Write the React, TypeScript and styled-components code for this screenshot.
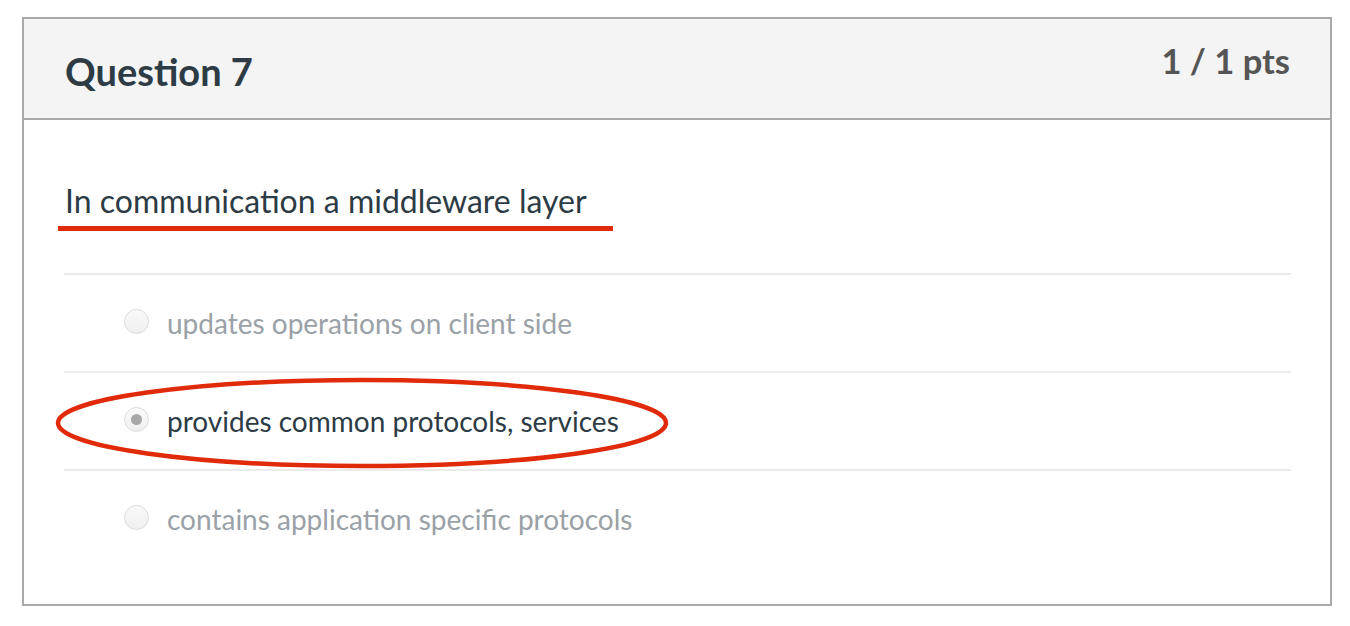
import React from "react";
import styled, { createGlobalStyle } from "styled-components";

const Global = createGlobalStyle`
  html, body { margin: 0; padding: 0; background: #fff; }
  body { font-family: Lato, "Open Sans", sans-serif; }
`;

const Page = styled.div`
  padding: 17px 19px 0 22px;
  width: 1350px;
  box-sizing: border-box;
`;

const Card = styled.div`
  position: relative;
  width: 1310px;
  height: 589px;
  box-sizing: border-box;
  border: 2px solid #a9a9a9;
  background: #fff;
`;

const Header = styled.div`
  height: 101px;
  box-sizing: border-box;
  background: #f4f4f4;
  border-bottom: 2px solid #a9a9a9;
  display: flex;
  justify-content: space-between;
  align-items: flex-start;
  padding: 0 40px 0 41px;
`;

const Title = styled.h2`
  margin: 0;
  margin-top: 30px;
  font-size: 38px;
  font-weight: 700;
  color: #2d3b45;
  line-height: 44px;
`;

const Points = styled.div`
  margin-top: 23px;
  font-size: 34.5px;
  font-weight: 700;
  color: #555;
  line-height: 38px;
`;

const Body = styled.div`
  padding: 0 39px 0 40px;
`;

const QuestionText = styled.p`
  position: relative;
  margin: 0;
  padding: 62px 0 53px 1px;
  font-size: 32px;
  color: #2d3b45;
  line-height: 38px;
  border-bottom: 2px solid #ebebeb;
`;

const Answer = styled.label<{ $last?: boolean }>`
  position: relative;
  display: flex;
  align-items: center;
  gap: 18px;
  height: 96px;
  padding-left: 60px;
  border-bottom: ${(p) => (p.$last ? "none" : "2px solid #ebebeb")};
`;

const Radio = styled.span<{ $checked?: boolean }>`
  width: 23px;
  height: 23px;
  border-radius: 50%;
  border: 1px solid #dcdcdc;
  background: linear-gradient(#fafafa, #efefef);
  display: flex;
  align-items: center;
  justify-content: center;
  flex: none;
  margin-top: -4px;
  &::after {
    content: "";
    display: ${(p) => (p.$checked ? "block" : "none")};
    width: 11px;
    height: 11px;
    border-radius: 50%;
    background: #a8a8a8;
  }
`;

const AnswerText = styled.span<{ $selected?: boolean }>`
  font-size: 28px;
  color: ${(p) => (p.$selected ? "#2d3b45" : "#9aa1a7")};
  line-height: 34px;
`;

const Underline = styled.span`
  position: absolute;
  left: -6px;
  top: 106px;
  width: 555px;
  height: 5px;
  background: #e02a0a;
`;

const Ellipse = styled.svg`
  position: absolute;
  left: -8px;
  top: 6px;
  overflow: visible;
  pointer-events: none;
`;

export default function App() {
  return (
    <>
      <Global />
      <Page>
        <Card>
          <Header>
            <Title>Question 7</Title>
            <Points>1 / 1 pts</Points>
          </Header>
          <Body>
            <QuestionText>
              In communication a middleware layer
              <Underline />
            </QuestionText>
            <Answer>
              <Radio />
              <AnswerText>updates operations on client side</AnswerText>
            </Answer>
            <Answer>
              <Radio $checked />
              <AnswerText $selected>provides common protocols, services</AnswerText>
              <Ellipse width="612" height="90" viewBox="0 0 612 90">
                <ellipse cx="306" cy="44" rx="304" ry="43" fill="none" stroke="#e02a0a" strokeWidth="4.5" />
              </Ellipse>
            </Answer>
            <Answer $last>
              <Radio />
              <AnswerText>contains application specific protocols</AnswerText>
            </Answer>
          </Body>
        </Card>
      </Page>
    </>
  );
}
